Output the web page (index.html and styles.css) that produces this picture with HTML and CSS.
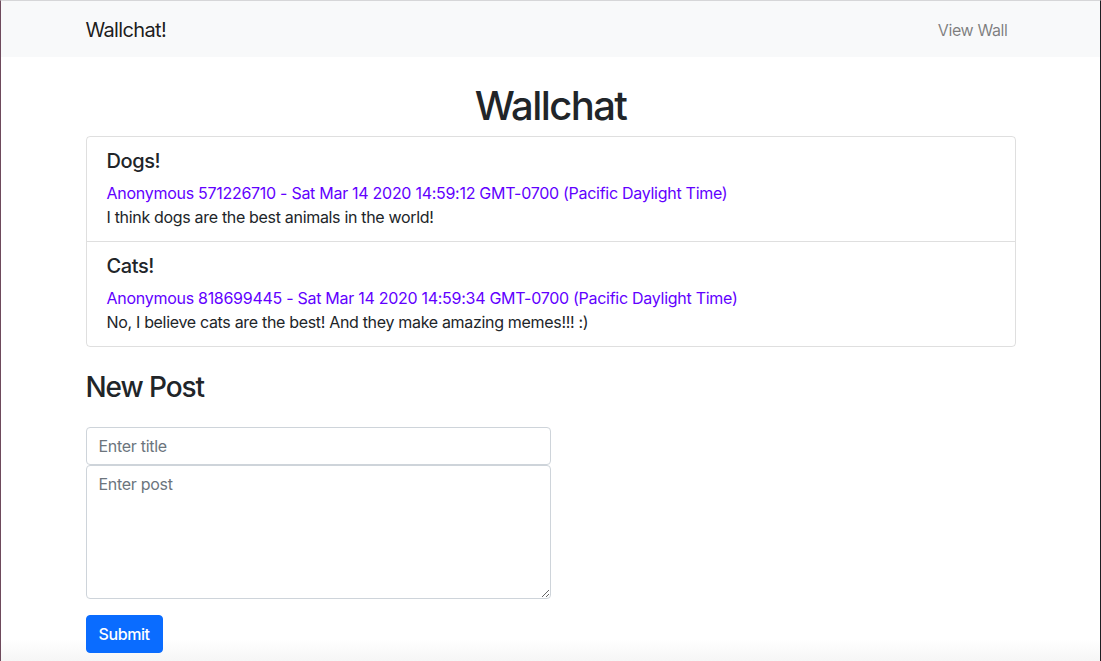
FILE: index.html
```html
<!DOCTYPE html>
<html lang="en">
<head>
<meta charset="utf-8">
<title>Wallchat!</title>
<link rel="stylesheet" href="styles.css">
</head>
<body>
<div class="frame">
  <nav class="navbar">
    <div class="nav-inner">
      <a class="brand" href="#">Wallchat!</a>
      <a class="nav-link" href="#">View Wall</a>
    </div>
  </nav>
  <main class="container">
    <h1 class="page-title">Wallchat</h1>
    <ul class="list-group">
      <li class="list-item">
        <h5 class="post-title">Dogs!</h5>
        <div class="post-meta">Anonymous 571226710 - Sat Mar 14 2020 14:59:12 GMT-0700 (Pacific Daylight Time)</div>
        <div class="post-body">I think dogs are the best animals in the world!</div>
      </li>
      <li class="list-item">
        <h5 class="post-title">Cats!</h5>
        <div class="post-meta">Anonymous 818699445 - Sat Mar 14 2020 14:59:34 GMT-0700 (Pacific Daylight Time)</div>
        <div class="post-body">No, I believe cats are the best! And they make amazing memes!!! :)</div>
      </li>
    </ul>
    <h3 class="section-title">New Post</h3>
    <form class="post-form">
      <input class="form-control" type="text" placeholder="Enter title">
      <textarea class="form-control textarea" rows="5" placeholder="Enter post"></textarea>
      <button class="btn" type="button">Submit</button>
    </form>
  </main>
  <div class="bottom-fade"></div>
</div>
</body>
</html>
```
FILE: styles.css
```css
* { box-sizing: border-box; }
html, body { margin: 0; padding: 0; height: 100%; }
body {
  font-family: Inter, "Liberation Sans", Arial, sans-serif;
  font-size: 16px;
  line-height: 1.5;
  color: #212529;
  background: #fff;
  overflow: hidden;
}
.frame {
  position: relative;
  height: 661px;
  border-top: 1px solid #d6d6d8;
  border-left: 1px solid #6e4a5c;
  border-right: 1px solid #1e1e22;
  overflow: hidden;
}
.navbar {
  background: #f8f9fa;
  height: 56px;
}
.nav-inner {
  width: 960px;
  margin: 0 auto;
  padding: 0 15px;
  height: 56px;
  display: flex;
  align-items: center;
  justify-content: space-between;
}
.brand {
  font-size: 20px;
  line-height: 30px;
  color: rgba(0,0,0,.9);
  text-decoration: none;
  padding-top: 2px;
  letter-spacing: -0.65px;
}
.nav-link {
  color: rgba(0,0,0,.5);
  text-decoration: none;
  padding: 10px 8px 8px;
  line-height: 24px;
  letter-spacing: -0.4px;
}
.container {
  width: 960px;
  margin: 0 auto;
  padding: 0 15px;
}
.page-title {
  font-size: 40px;
  font-weight: 500;
  line-height: 48px;
  text-align: center;
  margin: 25px 0 0;
  padding-bottom: 6px;
  letter-spacing: -1.6px;
}
.list-group {
  list-style: none;
  margin: 0;
  padding: 0;
  border: 1px solid rgba(0,0,0,.125);
  border-radius: 4px;
}
.list-item {
  padding: 12px 20px;
}
.list-item + .list-item {
  border-top: 1px solid rgba(0,0,0,.125);
}
.post-title {
  font-size: 20px;
  font-weight: 500;
  line-height: 24px;
  margin: 0 0 8px;
  letter-spacing: -0.4px;
}
.post-meta { color: #6200ff; letter-spacing: -0.28px; }
.post-body { color: #212529; letter-spacing: -0.32px; }
.section-title {
  font-size: 28px;
  font-weight: 500;
  line-height: 34px;
  margin: 23px 0 0;
  letter-spacing: -1.1px;
}
.post-form {
  width: 465px;
  margin-top: 23px;
  display: flex;
  flex-direction: column;
  align-items: flex-start;
}
.form-control {
  display: block;
  width: 100%;
  height: 38px;
  padding: 6px 12px;
  font-family: inherit;
  font-size: 16px;
  line-height: 24px;
  color: #495057;
  background: #fff;
  border: 1px solid #ced4da;
  border-radius: 4px;
  margin: 0;
  letter-spacing: -0.3px;
}
.form-control::placeholder { color: #6c757d; opacity: 1; }
.textarea {
  height: 134px;
  resize: vertical;
}
.btn {
  margin-top: 16px;
  height: 38px;
  padding: 6px 12px;
  font-family: inherit;
  font-size: 16px;
  font-weight: 500;
  line-height: 24px;
  color: #fff;
  background: #0a6cff;
  border: 1px solid #0a6cff;
  border-radius: 4px;
  letter-spacing: -0.4px;
}
.bottom-fade {
  position: absolute;
  left: 0;
  right: 0;
  bottom: 0;
  height: 22px;
  background: linear-gradient(to bottom, rgba(242,242,242,0), rgba(242,242,242,.7));
  pointer-events: none;
  z-index: -1;
}
.frame { isolation: isolate; }
```
